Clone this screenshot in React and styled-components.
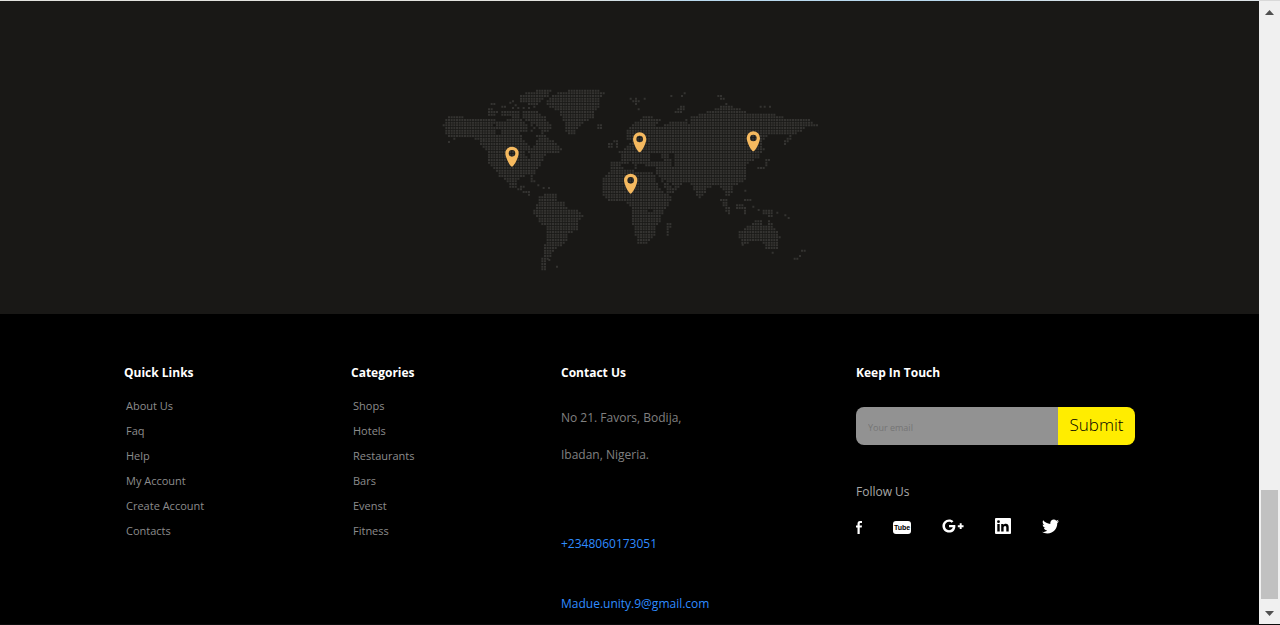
import React from "react";
import styled, { createGlobalStyle } from "styled-components";
import { FaGooglePlusG, FaTwitter } from "react-icons/fa";

const GlobalStyle = createGlobalStyle`
  * { box-sizing: border-box; }
  body { margin: 0; background: #000; font-family: "Open Sans", "Noto Sans", sans-serif; }
  h2, p, ul { margin: 0; padding: 0; }
  ul { list-style: none; }
  a { text-decoration: none; color: inherit; }
`;

/* Land outlines on a 1200 x 600 canvas; each dot sits on an 8 unit grid. */
const LAND = [
  // North and Central America
  [[36,138],[48,118],[60,108],[98,108],[104,118],[180,118],[190,110],[200,124],[225,124],[235,112],[275,120],[290,136],[300,150],[272,158],[275,175],[290,190],[308,204],[322,182],[320,165],[335,158],[350,165],[365,180],[385,195],[400,212],[380,220],[355,215],[345,230],[337,248],[330,262],[318,275],[310,288],[314,306],[304,304],[298,286],[270,290],[260,306],[264,322],[286,314],[286,324],[280,328],[302,334],[304,350],[285,342],[262,328],[240,320],[230,302],[206,286],[196,270],[178,255],[172,235],[170,215],[150,190],[145,180],[125,172],[82,168],[75,182],[62,172],[48,164],[48,142]],
  // Arctic islands
  [[265,50],[290,36],[330,30],[370,30],[352,50],[332,66],[312,82],[290,72],[268,64]],
  [[174,84],[188,84],[205,98],[196,108],[176,108]],
  [[212,92],[240,90],[244,108],[214,108]],
  [[246,88],[266,90],[272,116],[248,118]],
  [[276,92],[328,92],[332,108],[348,110],[358,130],[370,138],[356,154],[334,152],[314,134],[296,124],[276,116]],
  // Greenland and Iceland
  [[370,44],[386,36],[430,30],[500,28],[524,38],[508,58],[510,80],[494,95],[490,115],[465,125],[452,140],[436,150],[432,166],[414,162],[402,140],[400,115],[385,92],[352,78],[350,66]],
  [[494,138],[510,130],[520,140],[506,150]],
  // South America
  [[324,350],[340,344],[378,344],[384,360],[404,366],[404,382],[436,388],[460,406],[444,422],[442,450],[414,464],[408,484],[390,500],[370,512],[360,530],[352,542],[352,570],[334,568],[332,548],[340,520],[346,490],[346,440],[332,430],[312,404],[314,380],[322,370]],
  // British Isles
  [[534,190],[546,188],[546,204],[534,204]],
  [[550,176],[560,178],[566,200],[556,206]],
  // Iberia and western Europe
  [[532,300],[532,282],[546,270],[540,246],[574,244],[568,216],[592,204],[600,150],[680,170],[690,250],[620,256],[614,274],[606,240],[584,258],[570,276],[556,282],[546,296]],
  // Eurasia
  [[586,168],[592,150],[610,130],[640,112],[660,106],[690,120],[680,135],[685,145],[700,135],[720,126],[760,126],[780,112],[805,105],[835,95],[870,78],[892,70],[920,84],[955,98],[975,104],[1010,102],[1040,104],[1070,118],[1140,120],[1162,136],[1130,142],[1115,156],[1085,165],[1078,185],[1062,198],[1060,182],[1075,166],[1040,165],[1010,168],[995,185],[1002,210],[985,235],[970,244],[950,250],[946,275],[950,296],[925,314],[905,318],[906,340],[892,352],[876,326],[855,314],[832,326],[820,348],[810,356],[798,340],[780,310],[765,306],[748,322],[724,342],[702,330],[684,300],[680,276],[650,268],[645,250],[610,246],[590,220]],
  // Africa
  [[514,302],[532,280],[554,268],[604,264],[620,280],[650,276],[676,282],[682,312],[700,336],[726,346],[720,368],[698,396],[694,426],[678,436],[676,466],[654,490],[622,490],[608,436],[608,384],[594,370],[570,362],[536,364],[518,346]],
  [[712,424],[726,426],[716,466],[706,460],[706,440]],
  // South-east Asia
  [[872,360],[890,360],[904,400],[896,404],[884,384]],
  [[914,374],[936,366],[940,390],[916,390]],
  [[910,402],[928,402],[928,408],[910,408]],
  [[942,384],[952,380],[952,400],[942,402]],
  [[998,388],[1020,386],[1034,402],[1024,410],[1000,406]],
  [[944,358],[966,352],[966,360],[948,366]],
  // Japan
  [[1006,236],[1018,240],[1010,262],[986,272],[984,264],[1002,256]],
  // Australia
  [[928,456],[944,446],[956,436],[974,424],[984,416],[998,420],[998,434],[1012,438],[1018,418],[1028,436],[1044,456],[1050,474],[1040,508],[1010,506],[1002,492],[986,484],[960,488],[940,496],[930,490]],
  // Russian Arctic islands
  [[734,98],[750,80],[768,76],[760,90],[740,108]],
  [[862,46],[876,46],[894,60],[884,66]],
];

const WATER = [
  [[574,258],[586,250],[606,262],[596,270]],
  [[660,224],[694,224],[698,242],[664,246]],
  [[720,222],[736,224],[734,262],[722,254]],
  [[618,258],[674,262],[676,276],[622,274]],
  [[678,286],[686,286],[712,338],[700,334]],
  [[700,300],[716,306],[736,318],[724,322]],
  [[656,388],[666,388],[666,398],[656,398]],
  [[188,132],[194,132],[194,142],[188,142]],
  [[196,150],[210,150],[210,164],[198,164]],
  [[284,212],[308,226],[302,236],[282,222]],
  [[588,178],[602,176],[608,186],[590,194]],
  [[776,118],[784,118],[784,132],[776,132]],
];

const ISLETS = [[193,72],[185,72],[241,68],[249,64],[249,84],[257,76],[217,80],[225,80],[265,84],[281,84],[297,84],[305,136],[313,144],[305,152],[161,180],[57,186],[325,316],[341,324],[357,324],[381,560],[602,56],[618,56],[618,64],[618,72],[626,64],[610,64],[626,88],[644,56],[724,48],[756,48],[764,40],[992,80],[1004,80],[1020,80],[946,332],[970,380],[986,390],[1042,398],[1066,406],[1076,414],[938,494],[1028,518],[1116,512],[1124,512],[1110,528],[1102,536],[1094,536],[358,540]];

const inside = (x, y, poly) => {
  let hit = false;
  for (let i = 0, j = poly.length - 1; i < poly.length; j = i++) {
    const [xi, yi] = poly[i];
    const [xj, yj] = poly[j];
    if (yi > y !== yj > y && x < ((xj - xi) * (y - yi)) / (yj - yi) + xi) hit = !hit;
  }
  return hit;
};

const dot = (x, y) => `M${x - 3} ${y - 3}h6v6h-6z`;

const buildDots = () => {
  let d = "";
  for (let y = 32; y < 580; y += 8) {
    for (let x = 33; x < 1180; x += 8) {
      if (LAND.some((p) => inside(x, y, p)) && !WATER.some((p) => inside(x, y, p))) d += dot(x, y);
    }
  }
  return d + ISLETS.map(([x, y]) => dot(x, y)).join("");
};

const DOTS = buildDots();
const PINS = [[246, 260], [629, 217], [602, 341], [970, 214]];

const Window = styled.div`
  display: flex;
  min-height: 100vh;
  border-bottom: 1px solid #0b0b0b;
`;

const Page = styled.div`
  flex: 1;
  min-width: 0;
  display: flex;
  flex-direction: column;
`;

const PreviousEdge = styled.div`
  height: 1px;
  background: linear-gradient(90deg, #e2e2de 0 45%, #b9d9ee 55% 75%, #dde3e6 88%);
`;

const MapSection = styled.section`
  display: flex;
  justify-content: center;
  padding: 79px 0 34px;
  background: #191816;
`;

const WorldMap = styled.svg`
  display: block;
  width: 400px;
  height: 200px;
`;

const Footer = styled.footer`
  flex: 1;
  display: grid;
  grid-template-columns: 227fr 210fr 295fr 279fr;
  padding: 49px 124px 0;
  background: #000;
`;

const Column = styled.div`
  min-width: 0;
`;

const Heading = styled.h2`
  color: #fff;
  font-size: 12px;
  line-height: 20px;
  font-weight: 700;
  white-space: nowrap;
`;

const LinkList = styled.ul`
  padding: 10px 0 0 2px;
`;

const LinkItem = styled.li`
  font-size: 11px;
  line-height: 25px;
  color: #8c8c8c;
`;

const Address = styled.p`
  padding-top: 16px;
  color: #808080;
  font-size: 12px;
  line-height: 37px;
`;

const ContactLink = styled.a`
  display: block;
  width: max-content;
  margin-top: ${(p) => (p.$first ? 61 : 40)}px;
  color: #2f8cff;
  font-size: 12px;
  line-height: 20px;
`;

const Subscribe = styled.form`
  display: flex;
  height: 38px;
  margin-top: 24px;
  border-radius: 8px;
  overflow: hidden;
`;

const EmailInput = styled.input`
  flex: 1;
  min-width: 0;
  padding: 3px 12px 0;
  border: 0;
  background: #929292;
  color: #222;
  font-family: inherit;
  font-size: 9px;
  &::placeholder { color: #757575; opacity: 1; }
`;

const SubmitButton = styled.button`
  width: 77px;
  padding: 0 0 4px;
  border: 0;
  background: #ffed00;
  color: #000;
  font-family: inherit;
  font-size: 17px;
  font-weight: 300;
`;

const FollowText = styled.p`
  padding-top: 37px;
  color: #a8a8a8;
  font-size: 12px;
  line-height: 20px;
`;

const Socials = styled.ul`
  display: flex;
  align-items: center;
  gap: 31px;
  margin-top: 14px;
  color: #fff;
`;

const SocialLink = styled.a`
  display: flex;
  align-items: center;
  justify-content: center;
  width: ${(p) => p.$width}px;
  height: 20px;
`;

const Scrollbar = styled.div`
  width: 21px;
  display: flex;
  flex-direction: column;
  align-items: center;
  justify-content: flex-end;
  border-top: 1px solid #d9d9d9;
  background: #f0f0f0;
`;

const ScrollArrow = styled.svg`
  display: block;
  width: 9px;
  height: 5px;
  margin: ${(p) => (p.$up ? "9px 0 auto" : "12px 0 8px")};
`;

const Thumb = styled.div`
  width: 17px;
  height: 109px;
  background: #c1c1c1;
`;

function Links({ title, items }) {
  return (
    <Column>
      <Heading>{title}</Heading>
      <LinkList>
        {items.map((item) => (
          <LinkItem key={item}><a href="#">{item}</a></LinkItem>
        ))}
      </LinkList>
    </Column>
  );
}

export default function App() {
  return (
    <Window>
      <GlobalStyle />
      <Page>
        <PreviousEdge />
        <MapSection>
          <WorldMap viewBox="0 0 1200 600" role="img" aria-label="World map">
            <path d={DOTS} fill="#343331" />
            {PINS.map(([x, y]) => (
              <path
                key={x}
                transform={`translate(${x} ${y})`}
                fill="#f5b95f"
                fillRule="evenodd"
                d="M0 0C-6 0 -20 -28 -20 -40A20 20 0 0 1 20 -40C20 -28 6 0 0 0ZM0 -50A10 10 0 1 0 0 -30A10 10 0 1 0 0 -50Z"
              />
            ))}
          </WorldMap>
        </MapSection>
        <Footer>
          <Links title="Quick Links" items={["About Us", "Faq", "Help", "My Account", "Create Account", "Contacts"]} />
          <Links title="Categories" items={["Shops", "Hotels", "Restaurants", "Bars", "Evenst", "Fitness"]} />
          <Column>
            <Heading>Contact Us</Heading>
            <Address>No 21. Favors, Bodija,<br />Ibadan, Nigeria.</Address>
            <ContactLink $first href="tel:+2348060173051">+2348060173051</ContactLink>
            <ContactLink href="mailto:Madue.unity.9@gmail.com">Madue.unity.9@gmail.com</ContactLink>
          </Column>
          <Column>
            <Heading>Keep In Touch</Heading>
            <Subscribe onSubmit={(e) => e.preventDefault()}>
              <EmailInput type="email" placeholder="Your email" aria-label="Your email" />
              <SubmitButton type="submit">Submit</SubmitButton>
            </Subscribe>
            <FollowText>Follow Us</FollowText>
            <Socials>
              <li><SocialLink $width={6} href="#" aria-label="Facebook">
                <svg width="6" height="18" viewBox="0 -4 6 18"><path fill="currentColor" d="M1.500 13V6.500H0v-2h1.500V3C1.500 1.200 2.300 0 4 0h2v2H4.700C4 2 3.700 2.300 3.700 3v1.500H6l-.3 2h-2V13z" /></svg>
              </SocialLink></li>
              <li><SocialLink $width={18} href="#" aria-label="YouTube">
                <svg width="18" height="18" viewBox="0 -4 18 18">
                  <rect width="18" height="13" rx="3" fill="currentColor" />
                  <text x="9" y="9" textAnchor="middle" fontFamily="Liberation Sans, sans-serif" fontWeight="700" fontSize="7" fill="#000">Tube</text>
                </svg>
              </SocialLink></li>
              <li><SocialLink $width={22} href="#" aria-label="Google Plus"><FaGooglePlusG size={22} /></SocialLink></li>
              <li><SocialLink $width={16} href="#" aria-label="LinkedIn">
                <svg width="16" height="16" viewBox="0 0 16 16">
                  <rect width="16" height="16" rx="1" fill="currentColor" />
                  <path fill="#000" d="M2.300 6h2.400v7.500H2.300zM6.200 6h2.300v1.100C9 6.300 9.800 5.800 10.900 5.800c2 0 2.800 1.300 2.800 3.500v4.200h-2.400V9.700c0-1.100-.3-1.800-1.200-1.800S8.600 8.600 8.600 9.700v3.800H6.200z" />
                  <circle cx="3.500" cy="3.700" r="1.400" fill="#000" />
                </svg>
              </SocialLink></li>
              <li><SocialLink $width={17} href="#" aria-label="Twitter"><FaTwitter size={17} /></SocialLink></li>
            </Socials>
          </Column>
        </Footer>
      </Page>
      <Scrollbar aria-hidden="true">
        <ScrollArrow $up viewBox="0 0 9 5"><path d="M0 5L4.500 0L9 5z" fill="#505050" /></ScrollArrow>
        <Thumb />
        <ScrollArrow viewBox="0 0 9 5"><path d="M0 0L4.500 5L9 0z" fill="#505050" /></ScrollArrow>
      </Scrollbar>
    </Window>
  );
}
